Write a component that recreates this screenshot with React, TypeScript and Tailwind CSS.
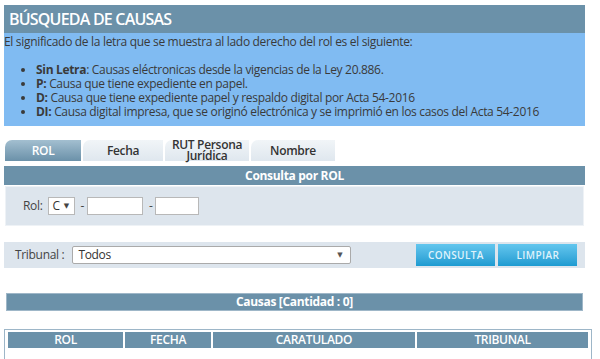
import React from "react";

const font = { fontFamily: '"Open Sans", "DejaVu Sans", sans-serif' };

function Tab({ label, active, className }: { label: React.ReactNode; active?: boolean; className: string }) {
  return (
    <div
      className={
        "h-[21px] rounded-tl-[7px] flex items-center justify-center text-center font-semibold leading-[11px] " +
        (active
          ? "bg-gradient-to-b from-[#a3bfd0] to-[#6b91a9] text-white "
          : "bg-gradient-to-b from-[#f1f5f8] to-[#dfe7ee] text-[#333] ") +
        className
      }
    >
      {label}
    </div>
  );
}

export default function App() {
  return (
    <div className="w-[600px] h-[359px] bg-white overflow-hidden text-[12px] text-[#3a3a3a] tracking-[-0.32px]" style={font}>
      <div className="pt-[5px] px-[4px] w-[589px]">
        <div className="h-[28px] bg-[#6b91a9] text-white font-semibold text-[16px] tracking-[-0.8px] leading-[28px] pl-[5px]">
          BÚSQUEDA DE CAUSAS
        </div>
        <div className="bg-[#80bbf2] h-[93px]">
          <div className="leading-[15px] pt-[1px]">El significado de la letra que se muestra al lado derecho del rol es el siguiente:</div>
          <ul className="list-disc pl-[32px] mt-[14px] leading-[14px]">
            <li><span className="font-bold">Sin Letra</span>: Causas eléctronicas desde la vigencias de la Ley 20.886.</li>
            <li><span className="font-bold">P:</span> Causa que tiene expediente en papel.</li>
            <li><span className="font-bold">D:</span> Causa que tiene expediente papel y respaldo digital por Acta 54-2016</li>
            <li><span className="font-bold">DI:</span> Causa digital impresa, que se originó electrónica y se imprimió en los casos del Acta 54-2016</li>
          </ul>
        </div>

        {/* Tabs */}
        <div className="mt-[14px] flex gap-[2px] pl-[1px]">
          <Tab label="ROL" active className="w-[76px]" />
          <Tab label="Fecha" className="w-[80px]" />
          <Tab label={<span className="block -mt-[1px]">RUT Persona<br />Jurídica</span>} className="w-[84px]" />
          <Tab label="Nombre" className="w-[84px]" />
        </div>

        <div className="mt-[5px] h-[19px] bg-[#6b91a9] text-white font-bold text-center leading-[19px]">
          Consulta por ROL
        </div>
        <div className="mt-[1px] mx-[1px] h-[40px] bg-[#dde5ed] border border-[#eef2f6] flex items-center pl-[17px] text-[#444]">
          <span>Rol:</span>
          <div className="ml-[5px] w-[27px] h-[18px] bg-white border border-[#b8b8b8] flex items-center pl-[4px] text-[#333]">
            C<span className="ml-[4px] text-[7px] text-[#444]">▼</span>
          </div>
          <span className="ml-[6px]">-</span>
          <div className="ml-[3px] w-[56px] h-[18px] bg-white border border-[#b8b8b8]" />
          <span className="ml-[6px]">-</span>
          <div className="ml-[2px] w-[44px] h-[18px] bg-white border border-[#b8b8b8]" />
        </div>

        {/* Tribunal */}
        <div className="mt-[16px] h-[26px] bg-[#dde5ed] flex items-center pl-[11px] text-[#444]">
          <span>Tribunal :</span>
          <div className="ml-[8px] w-[279px] h-[18px] bg-white border border-[#aaa] rounded-[2px] flex items-center pl-[5px] pr-[8px] justify-between text-[#333]">
            <span>Todos</span>
            <span className="text-[7px] text-[#555]">▼</span>
          </div>
          <div className="ml-[65px] w-[79px] h-[22px] bg-gradient-to-b from-[#62c6ee] to-[#1b9bd1] text-[#dff2fb] text-[10px] font-semibold tracking-[0.4px] flex items-center justify-center">
            CONSULTA
          </div>
          <div className="ml-[3px] w-[79px] h-[22px] bg-gradient-to-b from-[#62c6ee] to-[#1b9bd1] text-[#dff2fb] text-[10px] font-semibold tracking-[0.4px] flex items-center justify-center">
            LIMPIAR
          </div>
        </div>

        {/* Causas */}
        <div className="mt-[25px] mx-[2px] h-[18px] bg-[#6b91a9] border border-[#9fb7c8] text-white font-bold text-center leading-[16px]">
          Causas [Cantidad : 0]
        </div>

        <div className="mt-[18px] w-[588px] border border-[#9db6c8] border-b-0 pt-[2px] px-[3px] h-[40px]">
          <div className="flex gap-[2px] h-[16px] text-white font-semibold leading-[16px] text-center">
            <div className="w-[115px] bg-[#6b91a9]">ROL</div>
            <div className="w-[86px] bg-[#6b91a9]">FECHA</div>
            <div className="w-[202px] bg-[#6b91a9]">CARATULADO</div>
            <div className="w-[171px] bg-[#6b91a9]">TRIBUNAL</div>
          </div>
        </div>
      </div>
    </div>
  );
}
